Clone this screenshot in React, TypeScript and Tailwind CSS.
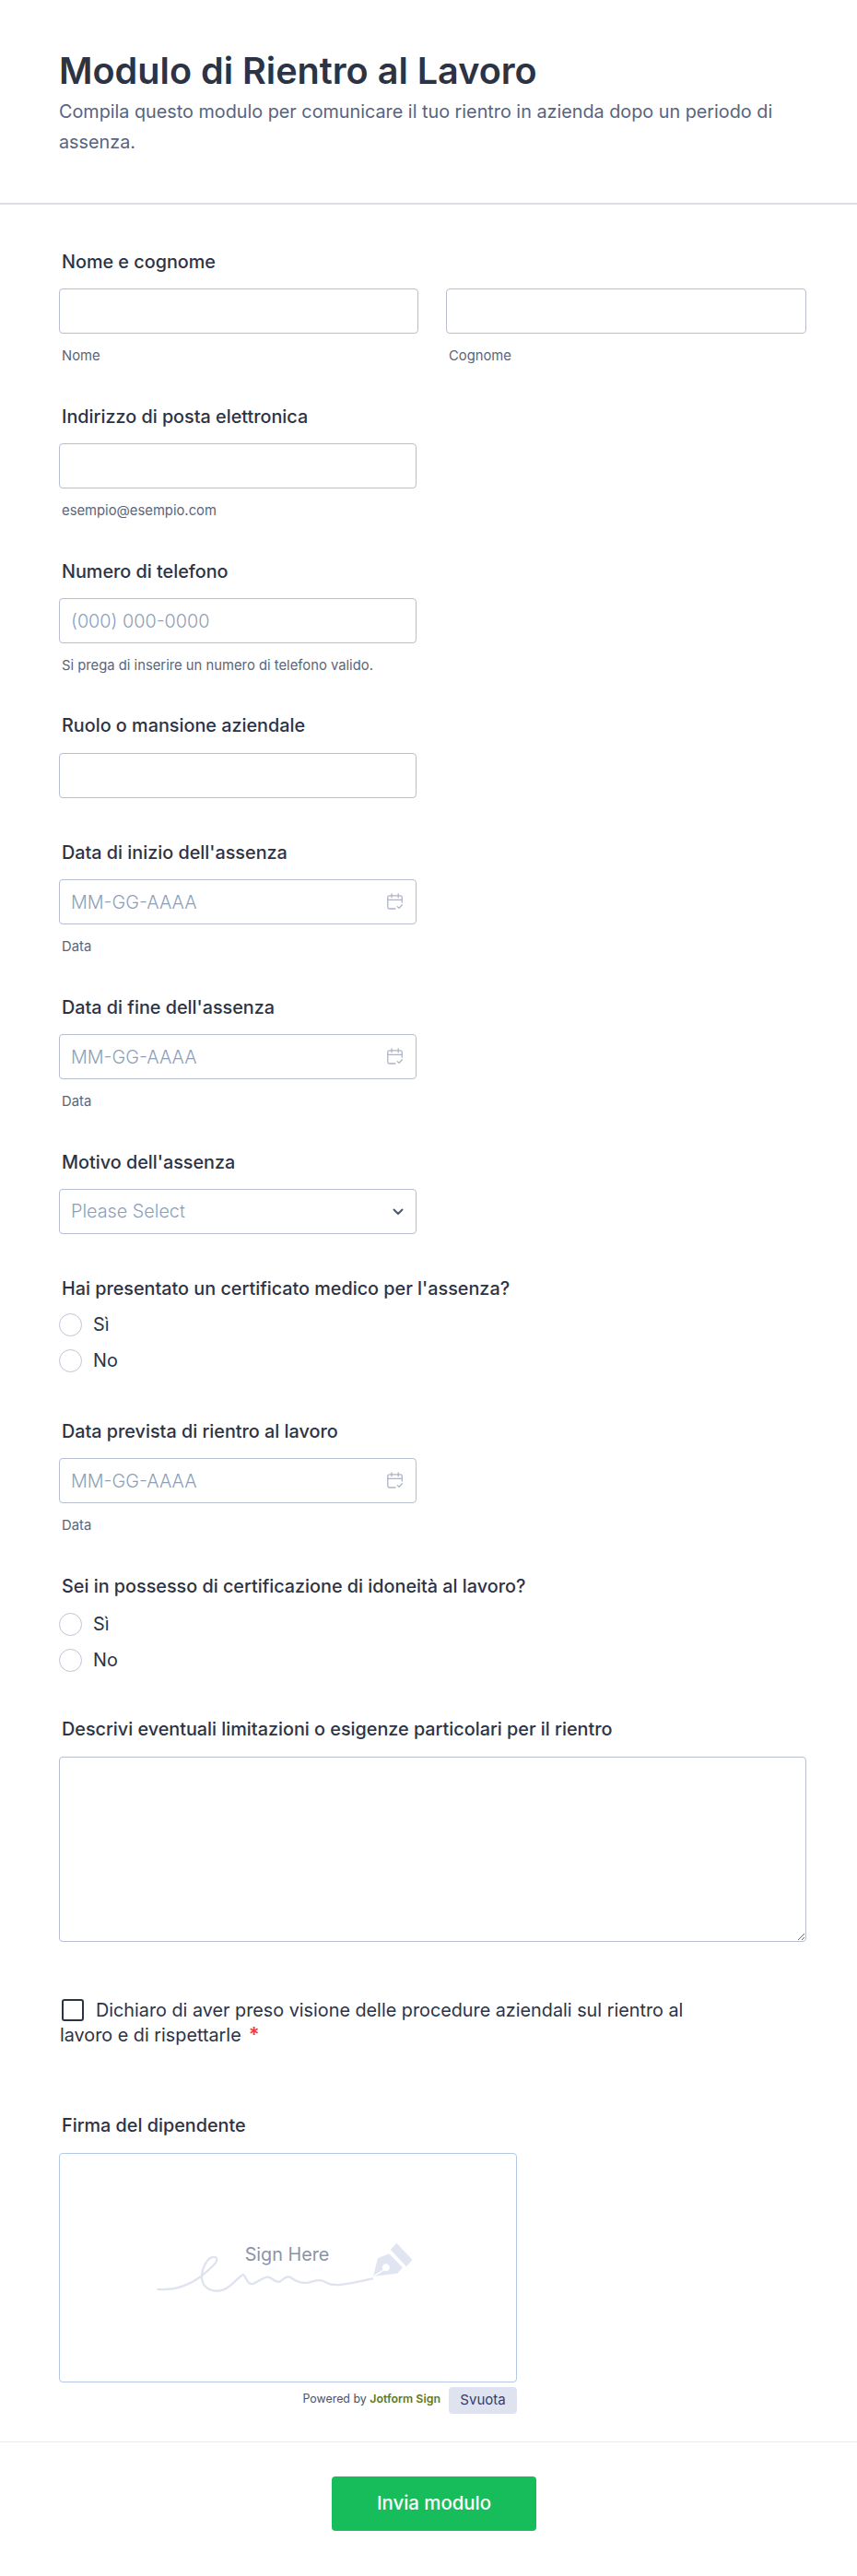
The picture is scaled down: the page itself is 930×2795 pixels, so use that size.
import React from "react";

const inter = { fontFamily: "Inter, 'Noto Sans', sans-serif" };

function Label({ children }: { children: React.ReactNode }) {
  return <div className="ml-[3px] h-6 whitespace-nowrap text-[19.8px] leading-6 font-medium text-[#2c3345]">{children}</div>;
}
function Sub({ children }: { children: React.ReactNode }) {
  return <div className="ml-[3px] mt-4 h-4 text-[14.8px] leading-4 text-[#5c6577]">{children}</div>;
}
const inputCls =
  "block h-[49px] w-full rounded-[4px] border border-[#b8bdd0] bg-white px-3 text-[19.8px] font-light text-[#2c3345] outline-none placeholder:text-[#8d9fb8]";

function CalendarIcon() {
  return (
    <svg viewBox="0 0 17 18" className="absolute right-[15px] top-[15px] h-[18px] w-[17px]" fill="none" stroke="#aeb4c4" strokeWidth="1.3" strokeLinecap="round" strokeLinejoin="round">
      <path d="M9 17H2.5A1.8 1.8 0 0 1 .8 15.2V4.6A1.8 1.8 0 0 1 2.5 2.8h12a1.8 1.8 0 0 1 1.8 1.8V10" />
      <path d="M5 .8v4M12.2 .8v4M.8 7.4h15.5" />
      <path d="M11.2 14.6l1.8 1.8 3.4-3.6" />
    </svg>
  );
}
function DateField({ label, mt }: { label: string; mt: string }) {
  return (
    <div className={mt}>
      <Label>{label}</Label>
      <div className="relative mt-[17px] w-[388px]">
        <input className={inputCls} placeholder="MM-GG-AAAA" />
        <CalendarIcon />
      </div>
      <Sub>Data</Sub>
    </div>
  );
}
function Radios() {
  return (
    <div className="mt-[15px] flex flex-col gap-[14px]">
      {["Sì", "No"].map((t) => (
        <div key={t} className="flex h-[25px] items-center">
          <span className="h-[25px] w-[25px] rounded-full border border-[#c0c5d4] bg-white" />
          <span className="ml-3 text-[19.8px] text-[#2c3345]">{t}</span>
        </div>
      ))}
    </div>
  );
}

export default function App() {
  return (
    <div style={inter} className="min-h-[2795px] w-[930px] bg-white">
      <header className="h-[222px] border-b-2 border-[#dcdfea] pl-16 pr-[55px] pt-[50px]">
        <h1 className="text-[39.6px] leading-[54px] font-semibold text-[#2c3345]">Modulo di Rientro al Lavoro</h1>
        <p className="mt-[1px] text-[19.8px] leading-[33px] text-[#57647e]">
          Compila questo modulo per comunicare il tuo rientro in azienda dopo un periodo di assenza.
        </p>
      </header>

      <main className="pl-16 pr-[55px] pt-[50px]">
        <section>
          <Label>Nome e cognome</Label>
          <div className="mt-[17px] grid grid-cols-[390px_391px] gap-x-[30px]">
            <div>
              <input className={inputCls} />
              <Sub>Nome</Sub>
            </div>
            <div>
              <input className={inputCls} />
              <Sub>Cognome</Sub>
            </div>
          </div>
        </section>

        <section className="mt-[46px]">
          <Label>Indirizzo di posta elettronica</Label>
          <input className={`${inputCls} mt-[17px] !w-[388px]`} />
          <Sub>esempio@esempio.com</Sub>
        </section>

        <section className="mt-[46px]">
          <Label>Numero di telefono</Label>
          <input className={`${inputCls} mt-[17px] !w-[388px]`} placeholder="(000) 000-0000" />
          <Sub>Si prega di inserire un numero di telefono valido.</Sub>
        </section>

        <section className="mt-[45px]">
          <Label>Ruolo o mansione aziendale</Label>
          <input className={`${inputCls} mt-[18px] !w-[388px]`} />
        </section>

        <DateField label="Data di inizio dell'assenza" mt="mt-[47px]" />
        <DateField label="Data di fine dell'assenza" mt="mt-[46px]" />

        <section className="mt-[46px]">
          <Label>Motivo dell'assenza</Label>
          <div className="mt-[17px] flex h-[49px] w-[388px] items-center justify-between rounded-[4px] border border-[#b8bdd0] bg-white pl-3 pr-[13px] text-[19.8px] font-light text-[#8d9fb8]">
            <span>Please Select</span>
            <svg viewBox="0 0 12 8" className="h-2 w-3" fill="none" stroke="#4c5670" strokeWidth="2" strokeLinecap="round" strokeLinejoin="round">
              <path d="M1.5 1.5L6 6l4.5-4.5" />
            </svg>
          </div>
        </section>

        <section className="mt-[47px]">
          <Label>Hai presentato un certificato medico per l'assenza?</Label>
          <Radios />
        </section>

        <DateField label="Data prevista di rientro al lavoro" mt="mt-[52px]" />

        <section className="mt-[46px]">
          <Label>Sei in possesso di certificazione di idoneità al lavoro?</Label>
          <div className="pt-[2px]"><Radios /></div>
        </section>

        <section className="mt-[50px]">
          <Label>Descrivi eventuali limitazioni o esigenze particolari per il rientro</Label>
          <textarea className="mt-[18px] block h-[201px] w-full rounded-[4px] border border-[#b8bdd0] bg-white outline-none" />
        </section>

        <section className="ml-[1px] mt-[61px] w-[690px] text-[19.8px] leading-[27px] text-[#2c3345]">
          <span className="float-left ml-[2px] mr-[13px] mt-[1px] block h-6 w-6 rounded-[3px] border-2 border-[#2c3345] bg-white" />
          Dichiaro di aver preso visione delle procedure aziendali sul rientro al lavoro e di rispettarle
          <span className="ml-2 text-[22px] leading-none font-semibold text-[#f23a3c]">*</span>
        </section>

        <section className="mt-[72px]">
          <Label>Firma del dipendente</Label>
          <div className="mt-[18px] w-[497px]">
            <div className="relative flex h-[249px] items-center justify-center rounded-[4px] border border-[#b4c7e4] bg-white">
              <svg viewBox="0 0 1000 330" className="absolute left-[75px] top-[54px] h-[110px] w-[330px]">
                <path d="M95 280C150 285 200 265 240 235C270 210 300 185 285 175C260 165 235 215 240 250C250 290 300 295 330 270C350 255 365 235 375 232C385 232 385 265 405 262C425 258 445 235 460 240C475 245 480 258 495 255C510 245 520 235 530 240C545 250 560 262 590 258C615 250 630 245 650 258C670 270 700 268 800 245" fill="none" stroke="#dfe3f0" strokeWidth="7" strokeLinecap="round" />
                <path fillRule="evenodd" fill="#e1e5f1" d="M803 238L818 178L855 163L900 208L882 228ZM845 196a12 12 0 1 0 .1 0Z" />
                <path d="M806 236L838 216" stroke="#fff" strokeWidth="4" />
                <path fill="#e1e5f1" d="M880 128L932 183L912 205L860 150Z" />
              </svg>
              <span className="relative -mt-[28px] -ml-[2px] text-[19.8px] text-[#8a93a8]">Sign Here</span>
            </div>
            <div className="mt-[5px] flex items-start justify-end">
              <span className="mt-[5px] text-[12.4px] leading-4 text-[#4a5268]">
                Powered by <span className="font-semibold text-[#5f7a1e]">Jotform Sign</span>
              </span>
              <span className="ml-[9px] flex h-[29px] w-[74px] items-center justify-center rounded-[4px] bg-[#dfe3f0] text-[15px] text-[#343c6a]">Svuota</span>
            </div>
          </div>
        </section>
      </main>

      <footer className="mt-[30px] flex justify-center border-t border-[#e9ebf4] pt-[37px]">
        <button className="ml-[12px] h-[59px] w-[222px] rounded-[4px] bg-[#18bd5b] text-[20.4px] font-medium text-white">Invia modulo</button>
      </footer>
    </div>
  );
}
